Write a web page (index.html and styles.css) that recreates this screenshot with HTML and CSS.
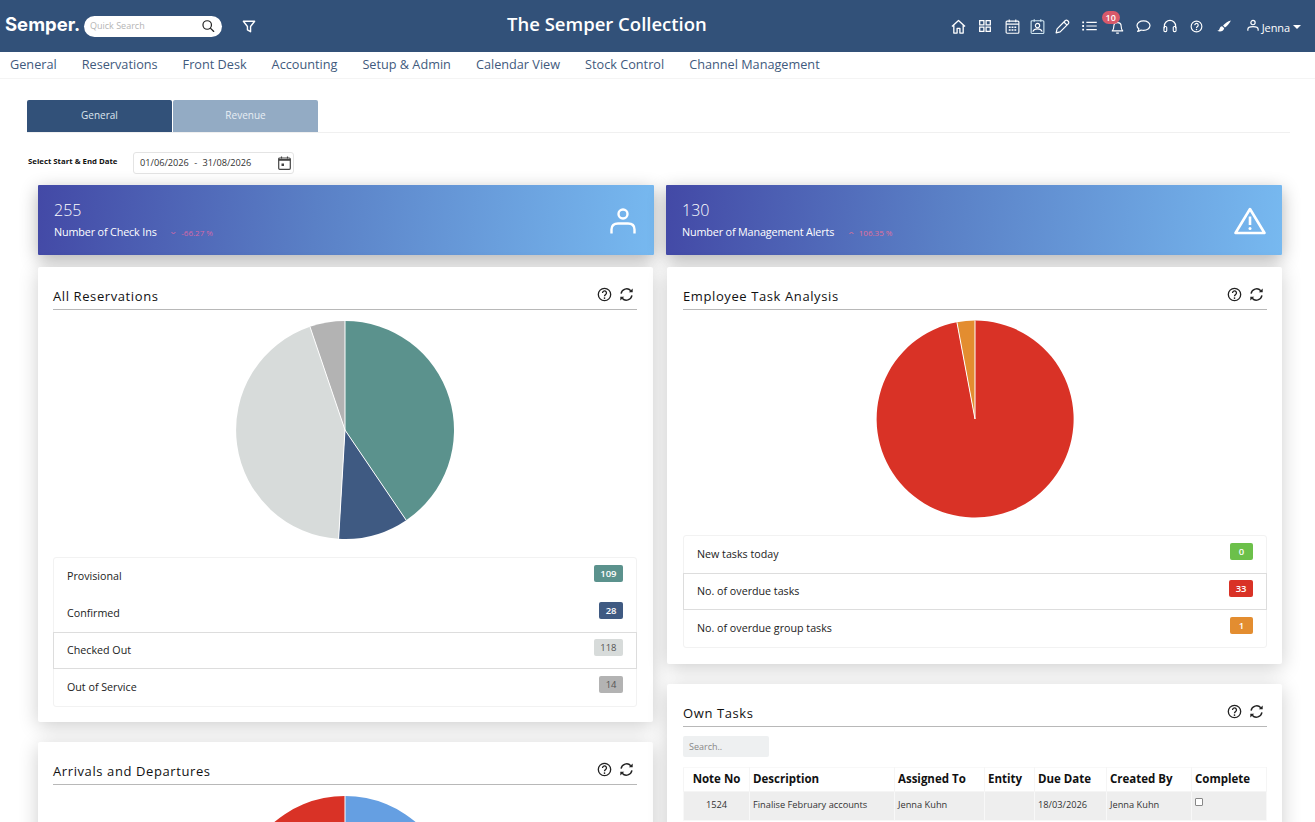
FILE: index.html
```html
<!DOCTYPE html>
<html lang="en">
<head>
    <meta charset="UTF-8">
    <title>The Semper Collection</title>
    <link rel="stylesheet" href="styles.css">
</head>
<body>
    <svg class="defs" width="0" height="0">
        <symbol id="i-help" viewBox="0 0 16 16"><circle cx="8" cy="8" r="6.6" fill="none" stroke="currentColor" stroke-width="1.4"/><path d="M5.9 6.3a2.1 2.1 0 1 1 3.3 1.7C8.400 8.600 8 9 8 9.900" fill="none" stroke="currentColor" stroke-width="1.4"/><circle cx="8" cy="11.800" r=".9" fill="currentColor"/></symbol>
        <symbol id="i-refresh" viewBox="0 0 16 16"><path d="M2.200 7A6 6 0 0 1 12.600 4M13.800 9A6 6 0 0 1 3.400 12" fill="none" stroke="currentColor" stroke-width="1.500"/><path d="M14.600 1.500v4.200h-4.200zM1.400 14.500v-4.200h4.200z" fill="currentColor"/></symbol>
    </svg>

    <header class="topbar">
        <div class="topbar-left">
            <span class="logo">Semper.</span>
            <div class="quick-search">
                <span>Quick Search</span>
                <svg width="13" height="12" viewBox="0 0 14 13"><circle cx="5.600" cy="5.400" r="4.600" fill="none" stroke="#222" stroke-width="1.300"/><path d="M9 8.800l4 4" stroke="#222" stroke-width="1.400"/></svg>
            </div>
            <svg class="filter" width="14" height="13" viewBox="0 0 16 15"><path d="M1.500 1.500h13L9.800 7.500v6L6.200 11.500v-4z" fill="none" stroke="#fff" stroke-width="1.600" stroke-linejoin="round"/></svg>
        </div>
        <div class="title">The Semper Collection</div>
        <div class="topbar-icons">
            <svg width="15" height="15" viewBox="0 0 16 16"><path d="M1 8l7-6.500L15 8M3 6.500V15h3.500V10h3v5H13V6.500" fill="none" stroke="#fff" stroke-width="1.400" stroke-linejoin="round"/></svg>
            <svg class="ml3" width="12" height="12" viewBox="0 0 12 12"><path d="M.7.700h4.200v4.200H.7zM7.100.700h4.200v4.200H7.100zM.7 7.100h4.200v4.200H.7zM7.100 7.100h4.200v4.200H7.100z" fill="none" stroke="#fff" stroke-width="1.300"/></svg>
            <svg class="ml4" width="15" height="15" viewBox="0 0 15 16"><rect x=".7" y="2.200" width="13.600" height="13" rx="1" fill="none" stroke="#fff" stroke-width="1.200"/><path d="M.7 5.500h13.600M4 .5v3M11 .5v3" stroke="#fff" stroke-width="1.200"/><path d="M3.500 8h2v1.500h-2zM6.500 8h2v1.500h-2zM9.500 8h2v1.500h-2zM3.500 11h2v1.500h-2zM6.500 11h2v1.500h-2zM9.500 11h2v1.500h-2z" fill="#fff"/></svg>
            <svg width="15" height="15" viewBox="0 0 15 16"><rect x=".7" y="1.800" width="13.600" height="13.600" rx="1" fill="none" stroke="#cfe6f2" stroke-width="1.200"/><path d="M4 .3v2.500M11 .3v2.500" stroke="#cfe6f2" stroke-width="1.200"/><circle cx="7.500" cy="7" r="2.300" fill="none" stroke="#fff" stroke-width="1.200"/><path d="M2.500 13.500c1-2.500 2.800-3 5-3s4 .5 5 3" fill="none" stroke="#fff" stroke-width="1.200"/></svg>
            <svg width="15" height="15" viewBox="0 0 16 16"><path d="M1.200 14.800l1-4.300L10.800 1.900c.8-.8 2-.8 2.800 0l.5.5c.8.8.8 2 0 2.800L5.500 13.800z" fill="none" stroke="#fff" stroke-width="1.300" stroke-linejoin="round"/><path d="M9.500 3.200l3.300 3.300" stroke="#fff" stroke-width="1.200"/></svg>
            <svg class="ml2" width="15" height="10" viewBox="0 0 16 11"><path d="M4.500 1.500H16M4.500 5.500H16M4.500 9.500H16" stroke="#fff" stroke-width="1.200"/><path d="M0 .5h2v2H0zM0 4.500h2v2H0zM0 8.500h2v2H0z" fill="#fff"/></svg>
            <div class="bell ml4">
                <svg width="13" height="14" viewBox="0 0 14 16"><path d="M1 12.500c1.500-1.500 1.800-3 1.800-5.500C2.800 4.500 4.500 3 7 3s4.200 1.500 4.200 4c0 2.500.3 4 1.800 5.500zM5.500 15h3" fill="none" stroke="#fff" stroke-width="1.300" stroke-linejoin="round"/></svg>
                <span class="bell-count">10</span>
            </div>
            <svg class="ml2" width="15" height="13" viewBox="0 0 16 14"><path d="M8 1C4.100 1 1 3.200 1 6c0 1.400.8 2.600 2 3.500-.1 1-.6 2-1.300 2.800 1.500-.2 2.800-.8 3.700-1.500.8.200 1.700.3 2.600.3 3.900 0 7-2.200 7-5.100S11.900 1 8 1z" fill="none" stroke="#fff" stroke-width="1.300" stroke-linejoin="round"/></svg>
            <svg class="ml2" width="14" height="14" viewBox="0 0 15 15"><path d="M1.500 10V7.500a6 6 0 0 1 12 0V10" fill="none" stroke="#fff" stroke-width="1.300"/><rect x="1" y="8" width="3" height="5.500" rx="1.200" fill="none" stroke="#fff" stroke-width="1.200"/><rect x="11" y="8" width="3" height="5.500" rx="1.200" fill="none" stroke="#fff" stroke-width="1.200"/></svg>
            <svg class="icon-white ml3" width="13" height="13"><use href="#i-help"/></svg>
            <svg class="ml4" width="14" height="12" viewBox="0 0 15 13"><path d="M15 .5C11.500 1.500 8.500 3.500 6.500 6l2 2C11 6.500 13.500 3.500 15 .5z" fill="#fff"/><path d="M5.500 6.800C3.500 7 3 8.500 2.500 10c-.3 1-1 1.500-2.300 1.700C3 13.200 7 12.500 7.700 9z" fill="#fff"/></svg>
            <div class="user">
                <svg width="12" height="13" viewBox="0 0 14 14"><circle cx="7" cy="3.600" r="2.500" fill="none" stroke="#fff" stroke-width="1.400"/><path d="M1 13v-1.500C1 9.500 3 8.400 7 8.400s6 1.100 6 3.100V13" fill="none" stroke="#fff" stroke-width="1.400"/></svg>
                <span>Jenna</span>
                <i class="caret"></i>
            </div>
        </div>
    </header>

    <nav class="menu">
        <a>General</a>
        <a>Reservations</a>
        <a>Front Desk</a>
        <a>Accounting</a>
        <a>Setup &amp; Admin</a>
        <a>Calendar View</a>
        <a>Stock Control</a>
        <a>Channel Management</a>
    </nav>

    <section class="page-head">
        <div class="tabs">
            <a class="tab active">General</a>
            <a class="tab">Revenue</a>
        </div>
        <div class="date-row">
            <label>Select Start &amp; End Date</label>
            <div class="date-box">
                <span>01/06/2026 <i class="dash-sep">-</i> 31/08/2026</span>
                <svg width="13" height="14" viewBox="0 0 13 14"><rect x=".7" y="2" width="11.600" height="11.300" rx="1" fill="none" stroke="#444" stroke-width="1.200"/><path d="M.7 3h11.600v1.800H.7z" fill="#444"/><path d="M3.500 .5v2M9.500 .5v2" stroke="#444" stroke-width="1.200"/><path d="M3.500 7.500h2.500v2.500H3.500z" fill="#444"/></svg>
            </div>
        </div>
    </section>

    <main class="dash">
        <div class="col col-left">
            <div class="stat">
                <div>
                    <div class="stat-num">255</div>
                    <div class="stat-label">Number of Check Ins <small class="drop"><svg width="5" height="4" viewBox="0 0 5 4"><path d="M.5 1l2 2 2-2" fill="none" stroke="currentColor"/></svg>-66.27 %</small></div>
                </div>
                <svg class="stat-person" width="26" height="26" viewBox="0 0 26 26"><circle cx="13" cy="6" r="4.500" fill="none" stroke="#fff" stroke-width="2.400"/><path d="M1.500 25.500v-4c0-4 2.500-6 6.500-6h10c4 0 6.500 2 6.500 6v4" fill="none" stroke="#fff" stroke-width="2.400"/></svg>
            </div>

            <div class="card">
                <div class="card-head">
                    <h3>All Reservations</h3>
                    <div class="card-tools">
                        <svg width="15" height="15"><use href="#i-help"/></svg>
                        <svg width="15" height="15"><use href="#i-refresh"/></svg>
                    </div>
                </div>
                <svg class="pie pie-res" width="220" height="220" viewBox="-110 -110 220 220">
                    <path d="M0 0V-109A109 109 0 0 1 61.200 90.200z" fill="#5b928d"/>
                    <path d="M0 0L61.200 90.200A109 109 0 0 1 -6.400 108.800z" fill="#3f5a82"/>
                    <path d="M0 0L-6.400 108.800A109 109 0 0 1 -35 -103.200z" fill="#d7dbda"/>
                    <path d="M0 0L-35 -103.200A109 109 0 0 1 0 -109z" fill="#b3b3b3"/>
                    <path d="M0 0V-109M0 0L61.200 90.200M0 0L-6.400 108.800M0 0L-35 -103.200" stroke="#fff" stroke-width="1"/>
                </svg>
                <ul class="legend">
                    <li>Provisional <b style="background:#5b928d">109</b></li>
                    <li>Confirmed <b style="background:#3f5a82">28</b></li>
                    <li class="ruled">Checked Out <b class="dim" style="background:#d7dbda">118</b></li>
                    <li>Out of Service <b class="dim" style="background:#b3b3b3">14</b></li>
                </ul>
            </div>

            <div class="card">
                <div class="card-head">
                    <h3>Arrivals and Departures</h3>
                    <div class="card-tools">
                        <svg width="15" height="15"><use href="#i-help"/></svg>
                        <svg width="15" height="15"><use href="#i-refresh"/></svg>
                    </div>
                </div>
                <svg class="pie pie-res" width="220" height="220" viewBox="-110 -110 220 220">
                    <path d="M0 0V-109A109 109 0 0 1 0 109z" fill="#659fe2"/>
                    <path d="M0 0V109A109 109 0 0 1 0 -109z" fill="#d93226"/>
                    <path d="M0 0V-109" stroke="#fff" stroke-width="1"/>
                </svg>
            </div>
        </div>

        <div class="col col-right">
            <div class="stat">
                <div>
                    <div class="stat-num">130</div>
                    <div class="stat-label">Number of Management Alerts <small><svg width="5" height="4" viewBox="0 0 5 4"><path d="M.5 3l2-2 2 2" fill="none" stroke="currentColor"/></svg>106.35 %</small></div>
                </div>
                <svg width="32" height="28" viewBox="0 0 32 28"><path d="M16 2L30.500 26H1.500z" fill="none" stroke="#fff" stroke-width="2.600" stroke-linejoin="round"/><path d="M16 9.500v8.500" stroke="#fff" stroke-width="2.600"/><circle cx="16" cy="21.500" r="1.500" fill="#fff"/></svg>
            </div>

            <div class="card">
                <div class="card-head">
                    <h3>Employee Task Analysis</h3>
                    <div class="card-tools">
                        <svg width="15" height="15"><use href="#i-help"/></svg>
                        <svg width="15" height="15"><use href="#i-refresh"/></svg>
                    </div>
                </div>
                <svg class="pie pie-task" width="198" height="198" viewBox="-99 -99 198 198">
                    <path d="M0 0V-98.500A98.500 98.500 0 1 1 -18.100 -96.800z" fill="#d93226"/>
                    <path d="M0 0L-18.100 -96.800A98.500 98.500 0 0 1 0 -98.500z" fill="#e38d30"/>
                    <path d="M0 0V-98.500M0 0L-18.100 -96.800" stroke="#fff" stroke-width="1"/>
                </svg>
                <ul class="legend legend-task">
                    <li>New tasks today <b style="background:#6cc04a">0</b></li>
                    <li class="ruled">No. of overdue tasks <b style="background:#d93226">33</b></li>
                    <li>No. of overdue group tasks <b style="background:#e38d30">1</b></li>
                </ul>
            </div>

            <div class="card">
                <div class="card-head">
                    <h3>Own Tasks</h3>
                    <div class="card-tools">
                        <svg width="15" height="15"><use href="#i-help"/></svg>
                        <svg width="15" height="15"><use href="#i-refresh"/></svg>
                    </div>
                </div>
                <div class="table-search">Search..</div>
                <table class="tasks">
                    <colgroup>
                        <col class="c1"><col class="c2"><col class="c3"><col class="c4"><col class="c5"><col class="c6"><col class="c7">
                    </colgroup>
                    <thead>
                        <tr><th class="center">Note No</th><th>Description</th><th>Assigned To</th><th>Entity</th><th>Due Date</th><th>Created By</th><th>Complete</th></tr>
                    </thead>
                    <tbody>
                        <tr><td class="center">1524</td><td>Finalise February accounts</td><td>Jenna Kuhn</td><td></td><td>18/03/2026</td><td>Jenna Kuhn</td><td><i class="check"></i></td></tr>
                    </tbody>
                </table>
            </div>
        </div>
    </main>
</body>
</html>
```

FILE: styles.css
```css
html, body { margin: 0; padding: 0; height: 100%; overflow: hidden; }
body { background: #fff; color: #222; font: 400 12px/1.4 "Open Sans", "Liberation Sans", sans-serif; }
ul { margin: 0; padding: 0; list-style: none; }
.defs { position: absolute; }
.ml2 { margin-left: 2px; }
.ml3 { margin-left: 3px; }
.ml4 { margin-left: 4px; }

/* top bar */
.topbar { display: flex; align-items: center; height: 52px; background: #325179; color: #fff; }
.topbar-left { display: flex; align-items: center; width: 507px; flex: none; padding-left: 5px; box-sizing: border-box; }
.logo { font: 700 18.500px/1 "Inter", "Liberation Sans", sans-serif; width: 79px; flex: none; margin-top: -3px; }
.quick-search { display: flex; align-items: center; justify-content: space-between; width: 138px; height: 21px; padding: 0 7px 0 6px; box-sizing: border-box; background: #fff; border-radius: 11px; font-size: 9px; color: #b5b5b5; }
.filter { margin-left: 20px; }
.title { font-size: 18.500px; font-weight: 600; line-height: 1; margin-top: -4px; }
.topbar-icons { display: flex; align-items: center; margin-left: auto; height: 100%; padding: 0 14px 0 0; box-sizing: border-box; gap: 10px; }
.bell { position: relative; display: flex; margin-top: 2px; }
.bell-count { position: absolute; top: -9px; left: -9px; width: 18px; height: 13px; border-radius: 7px; background: #d9596a; font-size: 9px; line-height: 13px; font-weight: 600; text-align: center; }
.icon-white { color: #fff; }
.user { display: flex; align-items: center; font-size: 11px; margin-left: 6px; gap: 3px; }
.user span { letter-spacing: -.1px; margin-top: 3px; }
.caret { width: 0; height: 0; border: 4px solid transparent; border-top: 4px solid #fff; border-bottom: 0; margin-top: 2px; }

/* menu */
.menu { display: flex; gap: 25px; height: 26px; padding-left: 10px; border-bottom: 1px solid #f4f4f4; font-size: 12.700px; line-height: 25px; color: #3f5a7d; }

/* tabs and date */
.page-head { padding: 21px 25px 0 27px; }
.tabs { display: flex; gap: 1px; border-bottom: 1px solid #f0f0f0; }
.tab { width: 145px; height: 32px; background: #93abc4; color: #e8eef4; font-size: 10px; line-height: 31px; text-align: center; border-radius: 2px 2px 0 0; }
.tab.active { background: #325179; color: #dde5ee; }
.date-row { display: flex; align-items: center; margin-top: 19px; height: 22px; }
.date-row label { font-size: 7.800px; font-weight: 700; color: #111; width: 105px; margin: -3px 0 0 1px; }
.date-box { display: flex; align-items: center; justify-content: space-between; width: 161px; height: 22px; padding: 0 2px 0 6px; box-sizing: border-box; border: 1px solid #e4e4e4; border-radius: 3px; font-size: 9.200px; color: #333; }
.dash-sep { font-style: normal; margin: 0 3px; }

/* dashboard */
.dash { display: grid; grid-template-columns: 616px 616px; column-gap: 12px; padding: 11px 33px 0 38px; }
.col { display: flex; flex-direction: column; min-width: 0; }
.stat { display: flex; align-items: center; justify-content: space-between; height: 70px; padding: 2px 16px 0; box-sizing: border-box; margin-bottom: 12px; background: linear-gradient(95deg, #4349a6 0%, #5a80c6 45%, #77b9f0 100%); color: #fff; box-shadow: 0 5px 18px rgba(0,0,0,.3); border-radius: 1px; }
.stat-person { margin-right: 2px; }
.stat-num { font-size: 16px; line-height: 20px; font-weight: 300; margin-top: -1px; }
.stat-label { font-size: 10.800px; line-height: 16px; margin-top: 4px; letter-spacing: -.15px; }
.stat-label small { font-size: 8px; color: #e0709a; margin-left: 12px; letter-spacing: 0; }
.stat-label small svg { margin-right: 5px; vertical-align: 1px; }
.stat-label small.drop { color: #d568a8; }
.card { background: #fff; padding: 15px; margin-bottom: 20px; border-radius: 2px; box-shadow: 0 4px 20px rgba(0,0,0,.2); }
.col-left .card { margin-right: 1px; padding-right: 16px; }
.col-right .card { margin-left: 1px; padding-left: 16px; }
.card-head { display: flex; align-items: center; justify-content: space-between; height: 27px; border-bottom: 1px solid #b8b8b8; margin-bottom: 11px; }
.card-head h3 { margin: 0; font-size: 13px; font-weight: 400; color: #111; letter-spacing: .6px; margin-top: 1px; }
.card-tools { display: flex; gap: 7px; padding-right: 3px; margin-top: -2px; color: #222; }
.pie { display: block; margin: 0 auto; margin-top: -1px; }
.legend { margin-top: 17px; border: 1px solid #f2f2f2; border-radius: 3px; font-size: 10.700px; color: #222; }
.legend li { display: flex; align-items: center; justify-content: space-between; height: 37px; box-sizing: border-box; padding: 0 14px; margin: 0 -1px; }
.legend-task { margin-bottom: 1px; }
.legend li.ruled { padding: 0 13px; border: 1px solid #ddd; }
.legend b { min-width: 10px; padding: 1px 6.500px; font-size: 9.500px; font-weight: 600; line-height: 15px; color: #fff; border-radius: 2px; text-align: center; margin-top: -6px; }
.legend b.dim { color: #555; font-weight: 400; }

/* tasks table */
.table-search { width: 86px; height: 21px; margin-top: -2px; padding-left: 6px; box-sizing: border-box; background: #eef0f1; border-radius: 2px; font-size: 9px; line-height: 21px; color: #888; }
.tasks { width: 584px; margin-top: 10px; border-collapse: collapse; table-layout: fixed; }
.c1 { width: 66px; } .c2 { width: 145px; } .c3 { width: 90px; } .c4 { width: 50px; } .c5 { width: 72px; } .c6 { width: 85px; }
.tasks th { height: 23px; padding: 0 3px; font-size: 11.500px; font-weight: 700; text-align: left; color: #111; border: 1px solid #f5f5f5; border-top-color: #f8f8f8; white-space: nowrap; }
.tasks td { height: 26px; padding: 0 3px 2px; font-size: 9.250px; background: #eeeeee; color: #333; border: 1px solid #f8f8f8; }
.tasks .center { text-align: center; }
.check { display: block; width: 6px; height: 6px; border: 1px solid #888; border-radius: 1px; background: #fff; margin-top: -6px; }
```
